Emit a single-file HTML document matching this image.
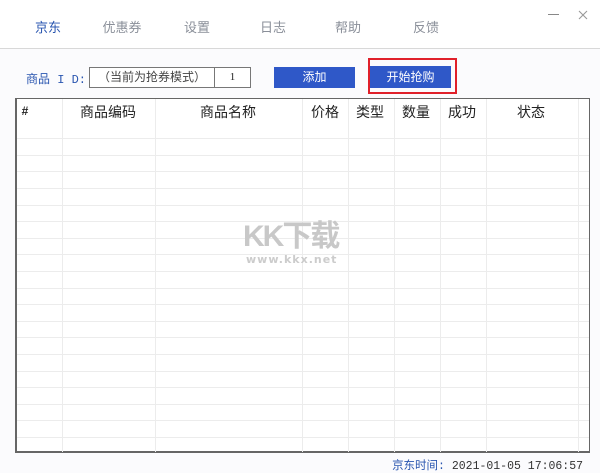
<!DOCTYPE html>
<html><head><meta charset="utf-8"><style>
*{margin:0;padding:0;box-sizing:border-box}
body{width:600px;height:473px;background:#fbfbfd;position:relative;overflow:hidden;font-family:"Liberation Sans","Noto Sans CJK SC",sans-serif;font-size:13px;color:#222}
.a{position:absolute}
.tab{position:absolute;top:17px;font-size:13px;color:#8a8f99;transform:translateX(-50%)}
.vl{position:absolute;top:99px;height:353px;width:1px;background:#ececec}
.hl{position:absolute;left:17px;width:572px;height:1px;background:#ececec}
.h{position:absolute;top:102px;font-size:14px;color:#222;transform:translateX(-50%)}
</style></head><body>
<div class="a" style="left:20px;top:0;width:56px;height:2px;background:#4a6aa8"></div>
<div class="a" style="left:0;top:0;width:600px;height:48px;background:#fff"></div>
<div class="a" style="left:0;top:48px;width:600px;height:1px;background:#d8d8d8"></div>
<div class="tab" style="left:48px;color:#2a56b0">京东</div>
<div class="tab" style="left:122px">优惠券</div>
<div class="tab" style="left:197px">设置</div>
<div class="tab" style="left:273px">日志</div>
<div class="tab" style="left:348px">帮助</div>
<div class="tab" style="left:426px">反馈</div>
<div class="a" style="left:548px;top:14px;width:11px;height:1px;background:#888"></div>
<svg class="a" style="left:578px;top:10px" width="10" height="10"><path d="M1 1L9 9M9 1L1 9" stroke="#999" stroke-width="1.1"/></svg>

<div class="a" style="left:26px;top:70px;font-size:12px;color:#2a56b0;font-family:'Liberation Mono','Noto Sans CJK SC',monospace">商品 I D:</div>
<div class="a" style="left:89px;top:67px;width:126px;height:21px;background:#fff;border:1px solid #777;font-size:12px;color:#444;text-align:center;line-height:19px">（当前为抢券模式）</div>
<div class="a" style="left:214px;top:67px;width:37px;height:21px;background:#fff;border:1px solid #777;font-size:11px;text-align:center;line-height:19px;font-family:'Liberation Serif',serif">1</div>
<div class="a" style="left:274px;top:67px;width:81px;height:21px;background:#2f58c8;color:#fff;font-size:12px;text-align:center;line-height:21px">添加</div>
<div class="a" style="left:368px;top:58px;width:89px;height:36px;border:2px solid #e0202a"></div>
<div class="a" style="left:370px;top:66px;width:81px;height:22px;background:#2f58c8;color:#fff;font-size:12px;text-align:center;line-height:22px">开始抢购</div>

<div class="a" style="left:15px;top:98px;width:575px;height:355px;background:#fff;border:1px solid #666;border-width:1px 1px 2px 2px"></div>
<div class="vl" style="left:62px"></div><div class="vl" style="left:155px"></div><div class="vl" style="left:302px"></div><div class="vl" style="left:348px"></div><div class="vl" style="left:394px"></div><div class="vl" style="left:440px"></div><div class="vl" style="left:486px"></div><div class="vl" style="left:578px"></div>
<div class="hl" style="top:138px"></div><div class="hl" style="top:155px"></div><div class="hl" style="top:171px"></div><div class="hl" style="top:188px"></div><div class="hl" style="top:205px"></div><div class="hl" style="top:221px"></div><div class="hl" style="top:238px"></div><div class="hl" style="top:254px"></div><div class="hl" style="top:271px"></div><div class="hl" style="top:288px"></div><div class="hl" style="top:304px"></div><div class="hl" style="top:321px"></div><div class="hl" style="top:337px"></div><div class="hl" style="top:354px"></div><div class="hl" style="top:371px"></div><div class="hl" style="top:387px"></div><div class="hl" style="top:404px"></div><div class="hl" style="top:420px"></div><div class="hl" style="top:437px"></div>
<div class="h" style="left:25px;font-size:12px;top:104px;font-weight:bold">#</div>
<div class="h" style="left:108px">商品编码</div>
<div class="h" style="left:228px">商品名称</div>
<div class="h" style="left:325px">价格</div>
<div class="h" style="left:370px">类型</div>
<div class="h" style="left:416px">数量</div>
<div class="h" style="left:462px">成功</div>
<div class="h" style="left:531px">状态</div>

<div class="a" style="left:243px;top:211px;font-size:30px;font-weight:bold;color:#c8c8c8;letter-spacing:-2px">KK下载</div>
<div class="a" style="left:246px;top:253px;font-size:11px;font-weight:bold;color:#ccc;letter-spacing:1px;font-family:'DejaVu Sans',sans-serif">www.kkx.net</div>

<div class="a" style="right:17px;top:457px;font-size:11.5px;color:#2a56b0;font-family:'Liberation Mono','Noto Sans CJK SC',monospace">京东时间: <span style="color:#333">2021-01-05 17:06:57</span></div>
</body></html>
